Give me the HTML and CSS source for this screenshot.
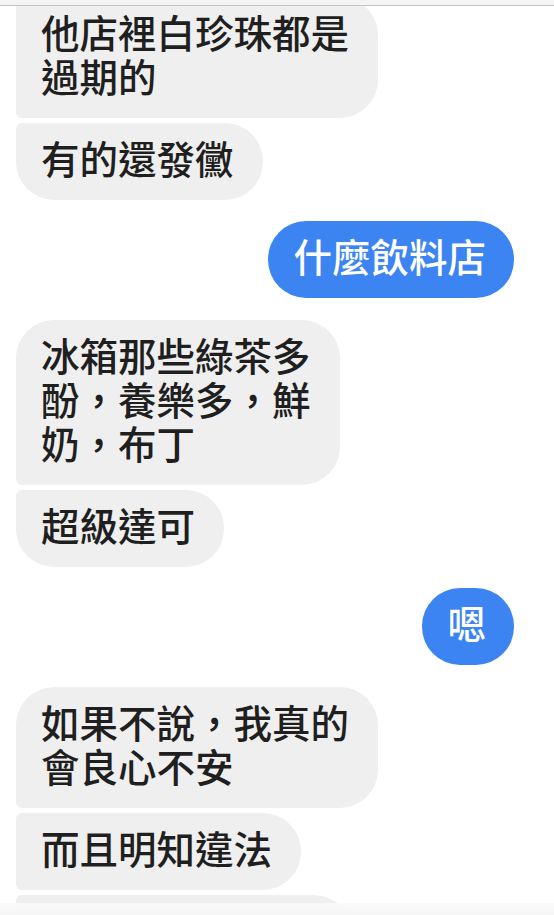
FILE: index.html
```html
<!DOCTYPE html>
<html lang="zh-Hant">
<head>
    <meta charset="UTF-8">
    <title>聊天</title>
    <link rel="stylesheet" href="styles.css">
</head>
<body>
    <div class="top-bar"></div>

    <div class="thread">
        <div class="msg them group-mid">他店裡白珍珠都是<br>過期的</div>
        <div class="msg them group-end">有的還發黴</div>

        <div class="msg me">什麼飲料店</div>

        <div class="msg them group-start">冰箱那些綠茶多<br>酚，養樂多，鮮<br>奶，布丁</div>
        <div class="msg them group-end">超級達可</div>

        <div class="msg me">嗯</div>

        <div class="msg them group-start">如果不說，我真的<br>會良心不安</div>
        <div class="msg them group-mid">而且明知違法</div>
        <div class="msg them group-mid cut">&nbsp;</div>
    </div>

    <div class="bottom-fade"></div>
</body>
</html>
```

FILE: styles.css
```css
body {
    margin: 0;
    height: 100vh;
    overflow: hidden;
    background-color: #ffffff;
    font-family: "Noto Sans CJK TC", "Noto Sans", sans-serif;
    color: #1f1f1f;
}

/* thin header strip sitting over the scrolled list */
.top-bar {
    position: absolute;
    top: 0;
    left: 0;
    right: 0;
    height: 5px;
    background-color: #f4f4f4;
    border-bottom: 1px solid #c4c4c4;
    z-index: 2;
}

.thread {
    display: flex;
    flex-direction: column;
    align-items: flex-start;
    padding: 0 40px 0 16px;
    margin-top: -3px;
}

.msg {
    font-size: 38.5px;
    font-weight: 500;
    line-height: 44px;
    padding: 12px 28px 21px 25px;
    border-radius: 38px;
    margin-bottom: 5px;
    white-space: nowrap;
}

.them {
    background-color: #efefef;
    padding-right: 29px;
}

.me {
    align-self: flex-end;
    background-color: #3b84f2;
    color: #ffffff;
    margin-top: 16px;
    margin-bottom: 22px;
}

/* grouped left bubbles get a tight corner on the side they join */
.group-start {
    border-bottom-left-radius: 6px;
}

.group-mid {
    border-top-left-radius: 6px;
    border-bottom-left-radius: 6px;
}

.group-end {
    border-top-left-radius: 6px;
}

/* bubble scrolled mostly out of view */
.cut {
    width: 282px;
}

.bottom-fade {
    position: absolute;
    left: 0;
    right: 0;
    bottom: 0;
    height: 12px;
    background: linear-gradient(to bottom, rgba(250, 250, 250, 0.9), #f6f6f6);
    z-index: 2;
}
```
